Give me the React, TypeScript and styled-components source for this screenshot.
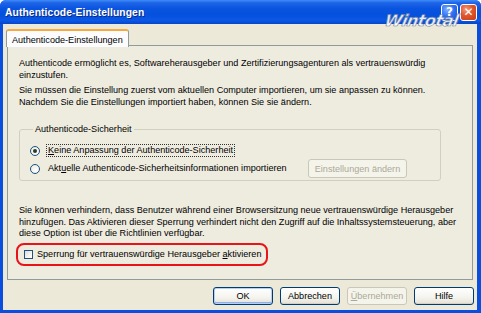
import React from "react";
import styled, { createGlobalStyle } from "styled-components";

const Global = createGlobalStyle`
  html, body { margin: 0; padding: 0; background: #ffffff; }
  body { width: 481px; height: 313px; overflow: hidden; font-family: "Liberation Sans", Arial, sans-serif; font-size: 9.1px; color: #000; }
  * { box-sizing: border-box; }
`;

const Window = styled.div`
  position: relative;
  width: 481px;
  height: 313px;
  display: flex;
  flex-direction: column;
  background: #0a4ee0;
  border-radius: 6px 6px 0 0;
  overflow: hidden;
`;

const TitleBar = styled.div`
  height: 24px;
  flex: none;
  display: flex;
  align-items: center;
  padding: 0 4px 0 5px;
  background: linear-gradient(180deg, #3d8cf7 0%, #1e64e8 12%, #0a55e0 35%, #0550dc 60%, #0a58e6 85%, #0845c8 100%);
`;

const Title = styled.div`
  flex: 1;
  color: #fff;
  font-weight: bold;
  font-size: 10.3px;
  letter-spacing: 0.1px;
  text-shadow: 1px 1px 0 #0a2a8a;
`;

const CaptionButton = styled.div<{ $kind: "help" | "close" }>`
  width: 17px;
  height: 17px;
  margin-left: 2px;
  border: 1px solid #fff;
  border-radius: 3px;
  display: flex;
  align-items: center;
  justify-content: center;
  color: #fff;
  font-weight: bold;
  font-size: 12px;
  font-family: "DejaVu Sans", sans-serif;
  background: ${(p) =>
    p.$kind === "close"
      ? "radial-gradient(circle at 35% 30%, #f39a7a 0%, #e0552c 45%, #c53c16 100%)"
      : "radial-gradient(circle at 35% 30%, #7fb0ff 0%, #2d6ef2 50%, #1a4fd8 100%)"};
`;

const Body = styled.div`
  flex: 1;
  min-height: 0;
  margin: 0 4px 3px 3px;
  background: #ece9d8;
  display: flex;
  flex-direction: column;
  padding: 5px 4px 5px 3px;
`;

const TabStrip = styled.div`
  display: flex;
  height: 17px;
  flex: none;
  position: relative;
  z-index: 1;
  margin-bottom: -1px;
`;

const Tab = styled.div`
  height: 18px;
  padding: 2px 5px 0 5px;
  border: 1px solid #919b9c;
  border-bottom: none;
  border-top: 2px solid #f7a93c;
  border-radius: 3px 3px 0 0;
  background: #fcfcfe;
  display: flex;
  align-items: center;
  white-space: nowrap;
`;

const Panel = styled.div`
  flex: 1;
  min-height: 0;
  margin-left: 1px;
  border: 1px solid #919b9c;
  background: #eeebdf;
  padding: 12px 12px 0 11px;
  display: flex;
  flex-direction: column;
`;

const Para = styled.p<{ $mt?: number }>`
  margin: ${(p) => p.$mt ?? 0}px 0 0 0;
  line-height: 11.5px;
  white-space: nowrap;
`;

const Group = styled.fieldset`
  margin: 16px 19px 0 0;
  padding: 10px 0 5px 10px;
  border: 1px solid #d0d0bf;
  border-radius: 3px;
  display: flex;
  flex-direction: column;
  gap: 5px;
`;

const Legend = styled.legend`
  padding: 0 2px;
  margin-left: 3px;
  color: #000;
  line-height: 10px;
`;

const RadioRow = styled.div`
  display: flex;
  align-items: center;
  height: 13px;
  white-space: nowrap;
`;

const Radio = styled.span<{ $checked?: boolean }>`
  width: 10px;
  height: 10px;
  flex: none;
  border-radius: 50%;
  border: 1px solid #1c5180;
  background: radial-gradient(circle at 60% 65%, #ffffff 0%, #e8e6dc 100%);
  display: flex;
  align-items: center;
  justify-content: center;
  margin-right: 6px;
  &::after {
    content: "";
    width: 4px;
    height: 4px;
    border-radius: 50%;
    background: ${(p) => (p.$checked ? "#2a3a2a" : "transparent")};
  }
`;

const Label = styled.span<{ $focus?: boolean }>`
  padding: 0 1px;
  border: 1px dotted ${(p) => (p.$focus ? "#333" : "transparent")};
  line-height: 11px;
`;

const Spacer = styled.div`
  flex: 1;
`;

const Button = styled.div<{ $disabled?: boolean; $default?: boolean; $w?: number }>`
  width: ${(p) => p.$w ?? 60}px;
  height: 18px;
  flex: none;
  display: flex;
  align-items: center;
  justify-content: center;
  white-space: nowrap;
  border: 1px solid ${(p) => (p.$disabled ? "#c9c7ba" : "#003c74")};
  border-radius: 3px;
  color: ${(p) => (p.$disabled ? "#aca899" : "#000")};
  background: ${(p) => (p.$disabled ? "#f5f4ea" : "linear-gradient(180deg, #ffffff 0%, #f4f3ee 60%, #e3e1d6 100%)")};
  box-shadow: ${(p) =>
    p.$default ? "inset 0 0 0 1px #b6cff5, inset 0 -1px 0 1px #8eb0ea" : p.$disabled ? "none" : "inset 0 -1px 0 #d6d0c5"};
`;

const SmallButton = styled(Button)`
  margin-right: 33px;
  height: 19px;
`;

const Locked = styled.div`
  margin: 3px 0 0 -3px;
  width: 252px;
  height: 23px;
  border: 2px solid #e8141a;
  border-radius: 8px;
  display: flex;
  align-items: center;
  padding-left: 6px;
  white-space: nowrap;
`;

const CheckBox = styled.span`
  width: 9px;
  height: 9px;
  flex: none;
  border: 1px solid #1c5180;
  background: linear-gradient(135deg, #dcdbd5 0%, #f4f4f0 60%, #ffffff 100%);
  margin-right: 4px;
`;

const Footer = styled.div`
  display: flex;
  flex: none;
  justify-content: flex-end;
  gap: 7px;
  padding-top: 7px;
  margin-right: -1px;
`;

const U = styled.span`
  text-decoration: underline;
`;

const Watermark = styled.div`
  position: absolute;
  left: 385px;
  top: 11px;
  font-family: "DejaVu Sans", sans-serif;
  font-weight: bold;
  font-style: italic;
  font-size: 16px;
  letter-spacing: -0.5px;
  color: #ffffff;
  opacity: 0.9;
  -webkit-text-stroke: 0.7px #6f7f9c;
  transform: skewX(-12deg);
`;

export default function App() {
  return (
    <>
      <Global />
      <Window>
        <TitleBar>
          <Title>Authenticode-Einstellungen</Title>
          <CaptionButton $kind="help">?</CaptionButton>
          <CaptionButton $kind="close">✕</CaptionButton>
        </TitleBar>
        <Body>
          <TabStrip>
            <Tab>Authenticode-Einstellungen</Tab>
          </TabStrip>
          <Panel>
            <Para>
              Authenticode ermöglicht es, Softwareherausgeber und Zertifizierungsagenturen als vertrauenswürdig
              <br />
              einzustufen.
            </Para>
            <Para $mt={4}>
              Sie müssen die Einstellung zuerst vom aktuellen Computer importieren, um sie anpassen zu können.
              <br />
              Nachdem Sie die Einstellungen importiert haben, können Sie sie ändern.
            </Para>
            <Group>
              <Legend>Authenticode-Sicherheit</Legend>
              <RadioRow>
                <Radio $checked />
                <Label $focus>
                  <U>K</U>eine Anpassung der Authenticode-Sicherheit
                </Label>
              </RadioRow>
              <RadioRow>
                <Radio />
                <Label>
                  Akt<U>u</U>elle Authenticode-Sicherheitsinformationen importieren
                </Label>
                <Spacer />
                <SmallButton $disabled $w={99}>
                  Einstellungen ändern
                </SmallButton>
              </RadioRow>
            </Group>
            <Para $mt={24}>
              Sie können verhindern, dass Benutzer während einer Browsersitzung neue vertrauenswürdige Herausgeber
              <br />
              hinzufügen. Das Aktivieren dieser Sperrung verhindert nicht den Zugriff auf die Inhaltssystemsteuerung, aber
              <br />
              diese Option ist über die Richtlinien verfügbar.
            </Para>
            <Locked>
              <CheckBox />
              <span>
                Sperrung für vertrauenswürdige Herausgeber <U>a</U>ktivieren
              </span>
            </Locked>
          </Panel>
          <Footer>
            <Button $default>OK</Button>
            <Button>Abbrechen</Button>
            <Button $disabled>
              <U>Ü</U>bernehmen
            </Button>
            <Button>Hilfe</Button>
          </Footer>
        </Body>
        <Watermark>Wintotal</Watermark>
      </Window>
    </>
  );
}
